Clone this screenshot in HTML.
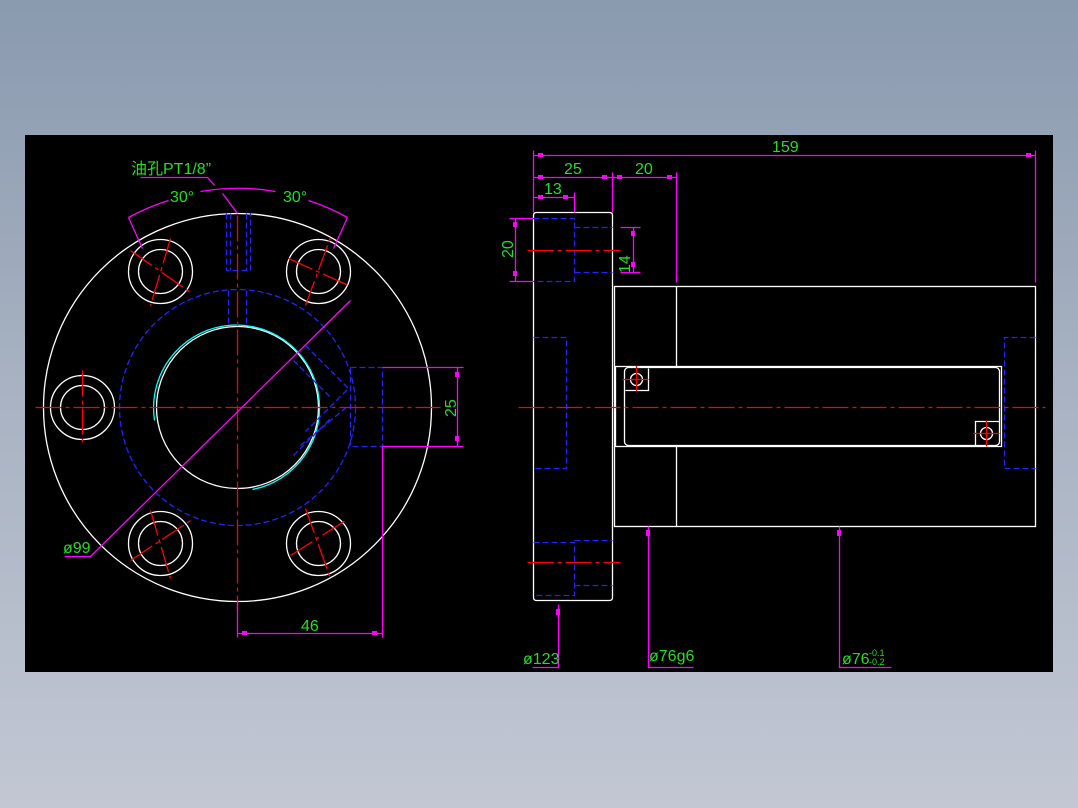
<!DOCTYPE html>
<html><head><meta charset="utf-8"><style>
html,body{margin:0;padding:0;width:1078px;height:808px;overflow:hidden;background:linear-gradient(#8a9aaf,#a9b3c3 50%,#c2c7d3);}
svg{position:absolute;left:0;top:0}
text{font-family:"Liberation Sans","Noto Sans CJK SC",sans-serif;fill:#1fe01f;font-size:16px}
</style></head><body>
<svg width="1078" height="808" viewBox="0 0 1078 808">
<rect x="25" y="135" width="1028" height="537" fill="#000"/>
<g fill="none" stroke-width="1.3" transform="translate(0.5,0.5)">
<!-- LEFT VIEW -->
<g stroke="#fff">
<circle cx="237" cy="407" r="194"/>
<circle cx="237" cy="407" r="81"/>
<circle cx="160" cy="271" r="32"/><circle cx="160" cy="271" r="22"/>
<circle cx="318" cy="271" r="32"/><circle cx="318" cy="271" r="22"/>
<circle cx="82" cy="407" r="32"/><circle cx="82" cy="407" r="22"/>
<circle cx="160" cy="543" r="32"/><circle cx="160" cy="543" r="22"/>
<circle cx="318" cy="543" r="32"/><circle cx="318" cy="543" r="22"/>
</g>
<path d="M154,420 A83,83 0 1 1 252,489" stroke="#0ff"/>
<circle cx="237" cy="407" r="118" stroke="#22f" stroke-dasharray="6,3"/>
<g stroke="#22f" stroke-dasharray="6,3">
<path d="M226,213V270H250V213M230,213V270M246,213V270"/>
<path d="M228,290V326M246,290V326"/>
<path d="M350,367H382V446H350V367"/>
<path d="M305,345L348,388L305,431M293,360L330,397M293,455L330,418M300,445L348,405"/>
</g>
<g stroke="#f00" stroke-dasharray="26,4,4,4">
<path d="M35,407H440M237,215V610"/>
<path d="M130,250L190,292M170,238L150,305M288,258L348,285M305,305L330,237"/>
<path d="M130,560L190,520M150,510L170,578M290,555L345,520M305,508L330,578"/>
<path d="M82,370V445"/>
</g>
<g stroke="#f0f">
<path d="M128,217A219,219 0 0 1 168,200M200,191A219,219 0 0 1 275,191M308,200A219,219 0 0 1 347,217"/>
<path d="M128,217L142,248M347,217L333,248"/>
<path d="M140,177H207L214,185M222,193L237,213"/>
<path d="M350,300L90,556H64"/>
<path d="M382,367H463M382,446H463M457,367V446"/>
<path d="M237,600V637M382,446V637M237,633H382"/>
</g>
<!-- RIGHT VIEW -->
<g stroke="#fff">
<path d="M533,215Q533,212 536,212H609Q612,212 612,215V597Q612,600 609,600H536Q533,600 533,597Z"/>
<rect x="614" y="286" width="421" height="240"/>
<path d="M676,286V366M676,446V526"/>
<rect x="615" y="366" width="386" height="80"/>
<rect x="624" y="367" width="375" height="78" rx="4"/>
<circle cx="636" cy="379" r="6"/><circle cx="986" cy="433" r="6"/>
<path d="M625,390H648V368M975,445V421H999"/>
</g>
<g stroke="#22f" stroke-dasharray="6,3">
<path d="M533,218H574V281H533M574,227H612M574,272H612"/>
<path d="M533,542H574V595H533M574,540H612M574,585H612"/>
<path d="M533,337H566V468H533"/>
<path d="M1035,337H1004V468H1035"/>
</g>
<g stroke="#f00" stroke-dasharray="26,4,4,4">
<path d="M518,407H1045"/>
<path d="M527,250H620M527,562H620"/>
<path d="M622,379H650M636,365V393M973,433H1000M986,420V447"/>
</g>
<g stroke="#f0f">
<path d="M533,150V212M1035,150V282M533,155H1035"/>
<path d="M612,172V212M676,172V282M533,177H676"/>
<path d="M574,192V212M533,197H574"/>
<path d="M509,218H533M509,281H533M515,218V281"/>
<path d="M620,227H640M620,272H640M633,227V272"/>
<path d="M558,604V667H532M648,526V667H693M839,526V667H891"/>
</g>
</g>
<g fill="#f0f">
<rect x="538" y="153" width="5" height="4"/><rect x="1026" y="153" width="5" height="4"/>
<rect x="538" y="175" width="5" height="4"/><rect x="602" y="175" width="5" height="4"/><rect x="617" y="175" width="5" height="4"/><rect x="667" y="175" width="5" height="4"/>
<rect x="538" y="195" width="5" height="4"/><rect x="563" y="195" width="5" height="4"/>
<rect x="513" y="222" width="4" height="5"/><rect x="513" y="271" width="4" height="5"/>
<rect x="631" y="231" width="4" height="5"/><rect x="631" y="262" width="4" height="5"/>
<rect x="556" y="609" width="4" height="6"/><rect x="646" y="530" width="4" height="6"/><rect x="837" y="530" width="4" height="6"/>
<rect x="455" y="372" width="4" height="5"/><rect x="455" y="436" width="4" height="5"/>
<rect x="242" y="631" width="5" height="4"/><rect x="372" y="631" width="5" height="4"/>
</g>
<text x="131" y="174">油孔PT1/8”</text>
<text x="170" y="202">30°</text>
<text x="283" y="202">30°</text>
<text x="63" y="553">ø99</text>
<text x="301" y="631">46</text>
<text transform="translate(456,417) rotate(-90)">25</text>
<text x="772" y="152">159</text>
<text x="564" y="174">25</text>
<text x="635" y="174">20</text>
<text x="544" y="194">13</text>
<text transform="translate(513,258) rotate(-90)">20</text>
<text transform="translate(630,273) rotate(-90)">14</text>
<text x="523" y="664">ø123</text>
<text x="649" y="661">ø76g6</text>
<text x="842" y="664">ø76</text>
<text x="869" y="656" style="font-size:9px">-0.1</text>
<text x="869" y="665" style="font-size:9px">-0.2</text>
</svg>
</body></html>
